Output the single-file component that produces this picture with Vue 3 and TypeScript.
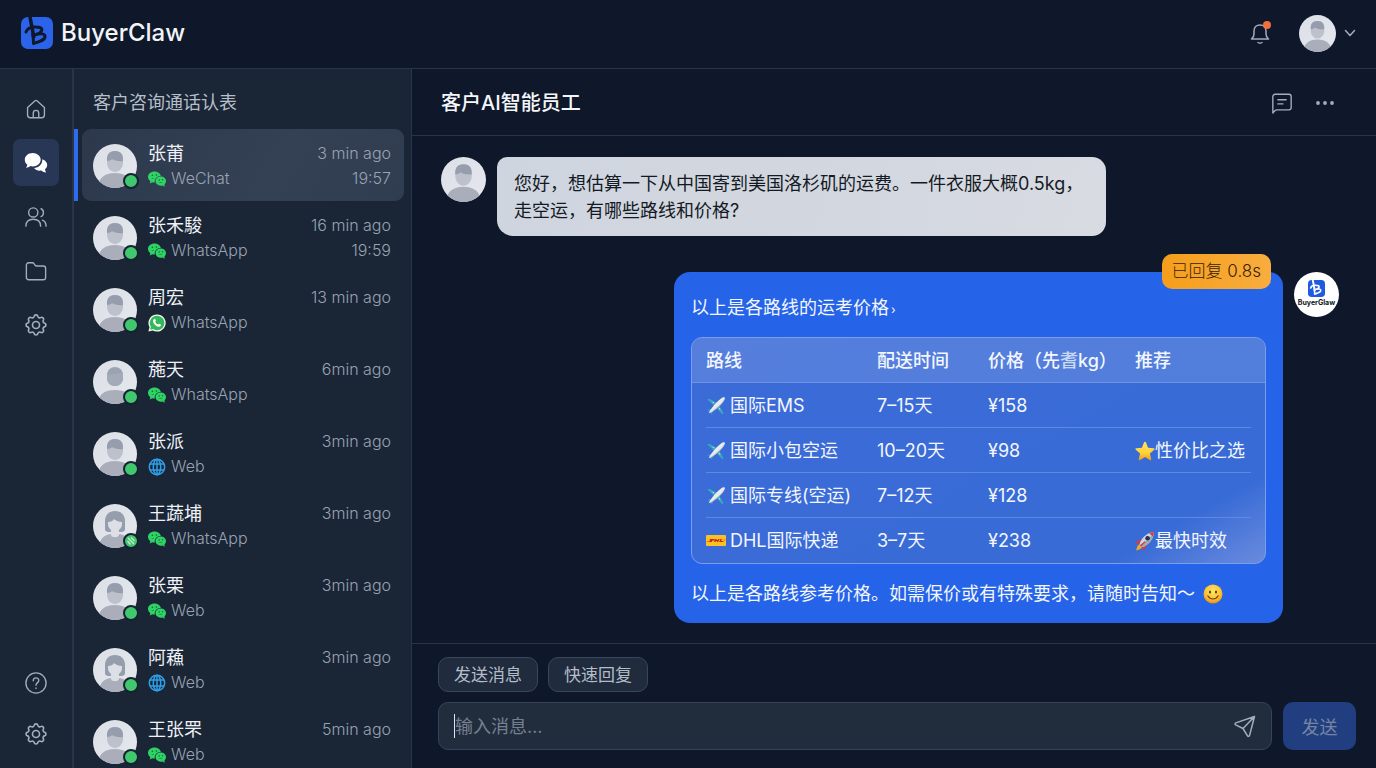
<script setup lang="ts">
import { ref } from 'vue'

type Channel = 'wechat' | 'whatsapp' | 'web'

interface Contact {
  name: string
  channel: Channel
  label: string
  ago: string
  time?: string
  avatar: 'man' | 'woman' | 'bald'
  badge?: boolean
}

interface Quote {
  icon: 'plane' | 'dhl'
  route: string
  days: string
  price: string
  tag?: string
  tagIcon?: 'star' | 'rocket'
}

const contacts: Contact[] = [
  { name: '张莆', channel: 'wechat', label: 'WeChat', ago: '3 min ago', time: '19:57', avatar: 'man' },
  { name: '张禾駿', channel: 'wechat', label: 'WhatsApp', ago: '16 min ago', time: '19:59', avatar: 'man' },
  { name: '周宏', channel: 'whatsapp', label: 'WhatsApp', ago: '13 min ago', avatar: 'man' },
  { name: '葹天', channel: 'wechat', label: 'WhatsApp', ago: '6min ago', avatar: 'bald' },
  { name: '张派', channel: 'web', label: 'Web', ago: '3min ago', avatar: 'man' },
  { name: '王蔬埔', channel: 'wechat', label: 'WhatsApp', ago: '3min ago', avatar: 'woman', badge: true },
  { name: '张栗', channel: 'wechat', label: 'Web', ago: '3min ago', avatar: 'man' },
  { name: '阿蘓', channel: 'web', label: 'Web', ago: '3min ago', avatar: 'woman' },
  { name: '王张罘', channel: 'wechat', label: 'Web', ago: '5min ago', avatar: 'man' },
]

const quotes: Quote[] = [
  { icon: 'plane', route: '国际EMS', days: '7–15天', price: '¥158' },
  { icon: 'plane', route: '国际小包空运', days: '10–20天', price: '¥98', tag: '性价比之选', tagIcon: 'star' },
  { icon: 'plane', route: '国际专线(空运)', days: '7–12天', price: '¥128' },
  { icon: 'dhl', route: 'DHL国际快递', days: '3–7天', price: '¥238', tag: '最快时效', tagIcon: 'rocket' },
]

const selected = ref(0)
const draft = ref('')
</script>

<template>
  <div class="app">
    <svg class="sprite" aria-hidden="true">
      <defs>
        <linearGradient id="face-bg" x1="0" y1="0" x2="1" y2="1">
          <stop offset="0" stop-color="#dcdfe6" />
          <stop offset="1" stop-color="#e6e8ee" />
        </linearGradient>
        <linearGradient id="star-fill" x1="0" y1="0" x2="0" y2="1">
          <stop offset="0" stop-color="#ffe45c" />
          <stop offset="0.6" stop-color="#ffd23a" />
          <stop offset="1" stop-color="#f59a1b" />
        </linearGradient>
        <radialGradient id="smile-fill" cx="0.5" cy="0.35" r="0.65">
          <stop offset="0" stop-color="#ffe76a" />
          <stop offset="0.65" stop-color="#fcc22e" />
          <stop offset="1" stop-color="#ee8a1d" />
        </radialGradient>
        <clipPath id="face-clip"><circle cx="22" cy="22" r="22" /></clipPath>
      </defs>
      <symbol id="man" viewBox="0 0 44 44">
        <g clip-path="url(#face-clip)">
          <rect width="44" height="44" fill="url(#face-bg)" />
          <path d="M5 44c0-10 7-15 17-15s17 5 17 15z" fill="#a9aeba" />
          <path d="M14 14c0-4 3-7 8-7s8 3 8 7v5c0 5-4 9-8 9s-8-4-8-9z" fill="#bcc1cc" />
          <path d="M14 17c-.5-6 2-10 8-10s8.500 4 8 10c-3 .5-8 0-11-2-1 1.500-3 1.500-5 2z" fill="#969dac" />
        </g>
      </symbol>
      <symbol id="bald" viewBox="0 0 44 44">
        <g clip-path="url(#face-clip)">
          <rect width="44" height="44" fill="url(#face-bg)" />
          <path d="M5 44c0-10 7-14 17-14s17 4 17 14z" fill="#a9aeba" />
          <rect x="14" y="7" width="16" height="19" rx="8" fill="#9ba2b0" />
          <path d="M14 15c5-1 10-1 16-2v5c0 5-3.500 8-8 8s-8-3-8-8z" fill="#a4aab7" />
        </g>
      </symbol>
      <symbol id="woman" viewBox="0 0 44 44">
        <g clip-path="url(#face-clip)">
          <rect width="44" height="44" fill="url(#face-bg)" />
          <path d="M6 44c0-9 5-13 12-14h8c7 1 12 5 12 14z" fill="#a9aeba" />
          <path d="M12 25V17c0-6 4-10 10-10s10 4 10 10v8c0 2-1.500 3-3.500 3h-13c-2 0-3.500-1-3.500-3z" fill="#969dac" />
          <path d="M18 24h8v7c-1 3-7 3-8 0z" fill="#dcdfe6" />
          <path d="M15 18c3 0 5-1 6-3 2 2 5 3 8 3v2c0 4-3 7-7 7s-7-3-7-7z" fill="#dcdfe6" />
        </g>
      </symbol>
      <symbol id="wechat" viewBox="0 0 18 16">
        <path d="M6.500 .6C2.900.6 0 2.900 0 6c0 1.700.9 3.200 2.300 4.200l-.5 2.300 2.600-1.300c.8.200 1.500.3 2.300.2C6.500 7.600 9 5 12.900 5 12.200 2.400 9.600.6 6.500.6z" fill="#2fd264" />
        <path d="M18 10.100c0-2.700-2.400-4.600-5.200-4.600S7.500 7.400 7.500 10.100s2.400 4.600 5.300 4.600c.6 0 1.200-.1 1.700-.2l2.300 1.300-.4-2.200c.9-.8 1.600-2 1.600-3.500z" fill="#2fd264" />
        <g fill="#17603c">
          <circle cx="4.400" cy="4.300" r=".8" /><circle cx="8.400" cy="4" r=".8" />
          <circle cx="11.200" cy="9" r=".7" /><circle cx="14.500" cy="8.700" r=".7" />
          <path d="M11.300 11.200h2.900v.6h-2.900zM3.800 7.300h2v.5h-2z" />
        </g>
      </symbol>
      <symbol id="whatsapp" viewBox="0 0 18 18">
        <path d="M9 .4A8.600 8.600 0 0 0 1.500 13.200L.4 17.600l4.500-1.100A8.600 8.600 0 1 0 9 .4z" fill="#f1f7f3" />
        <path d="M9 1.800a7.200 7.200 0 0 0-6.100 11l-.7 2.900 3-.7A7.200 7.200 0 1 0 9 1.800z" fill="#35b85c" />
        <path d="M6.300 4.900c.5-.3.900-.1 1.100.4l.5 1.200c.1.500-.6 1-.7 1.300.5 1.200 1.500 2.200 2.900 2.800.4-.1.800-.9 1.300-.8l1.300.7c.5.300.3.900.1 1.300-.5.900-1.700 1.200-2.700.9-2.500-.8-4.300-2.500-5-4.900-.3-1.200.2-2.400 1.200-2.900z" fill="#fff" />
      </symbol>
      <symbol id="web" viewBox="0 0 18 18">
        <g fill="none" stroke="#2f9fe8" stroke-width="1.500">
          <circle cx="9" cy="9" r="7.700" />
          <ellipse cx="9" cy="9" rx="3.700" ry="7.700" />
          <path d="M9 1.300v15.400M2 6h14M2 12h14" />
        </g>
      </symbol>
      <symbol id="plane" viewBox="0 0 20 20">
        <path d="M1.500 3.500l1.800-.8 8.200 4.600-2.800 2.900zM16.500 18.500l.8-1.800-4.600-8.200-2.900 2.800z" fill="#38a9bd" />
        <path d="M1.300 14.300l1.500-.7 3.700.2-1.300 1.400zM5.600 18.800l.8-1.500-.2-3.800-1.500 1.300z" fill="#38a9bd" />
        <path d="M2.800 17.200c1-3.700 9.300-13.200 13.700-15.600 1.500-.8 2.700-.6 2.300 1.200C17.800 7.200 7.500 16.300 2.800 17.200z" fill="#e9ecef" />
        <path d="M2.800 17.200c5-2.500 13-9.700 16-14.400C17.800 7.200 7.500 16.300 2.800 17.200z" fill="#a9b3bd" />
        <path d="M6.600 6.200l1.200.5M13.300 12.200l.5 1.300" stroke="#d7e6ea" stroke-width="1" />
      </symbol>
      <symbol id="dhl" viewBox="0 0 20 20">
        <rect x="0" y="4" width="20" height="11" rx="1" fill="#f9c224" />
        <path d="M3.500 8h4.600c1 0 .9 1 .2 1.400H6.500L5.700 11H3l1.100-2zM9.300 8h1.500l-.4 1h1.200l.5-1h1.500l-1.400 3h-1.500l.4-1.100h-1.100L9.500 11H8zM14.400 8h1.600l-1 2h2.600l-.5 1h-3.900z" fill="#cf2418" />
        <path d="M.8 10h2v.6h-2zM17.300 8.700h2v.6h-2z" fill="#cf2418" />
      </symbol>
      <symbol id="star" viewBox="0 0 20 20">
        <path d="M10 .8c.5 0 .8.300 1 .8l2.100 5.100 5.600.5c1 .1 1.200 1 .5 1.600l-4.300 3.700 1.300 5.600c.2.900-.5 1.400-1.300.9L10 16l-4.900 3c-.8.500-1.500 0-1.300-.9l1.300-5.600L.8 8.800C.1 8.200.3 7.300 1.300 7.200l5.600-.5L9 1.600c.2-.5.5-.8 1-.8z" fill="url(#star-fill)" />
      </symbol>
      <symbol id="rocket" viewBox="0 0 20 20">
        <path d="M6.500 8.200L2 10.300.9 13l4-.8zM12 13.500l-2 4.600-2.700 1.200.8-4z" fill="#d83a3f" />
        <path d="M4.700 13.200C2.600 13.800 1.800 16 1.200 19.400c3.300-.6 5.500-1.800 5.900-3.900z" fill="#f7a526" />
        <path d="M4.500 13.500C5.500 8 11 1.900 18.900.9 18.800 8.500 12.500 14.800 7 16z" fill="#cfd5dc" />
        <path d="M4.500 13.500L7 16c5.500-1.200 11.800-7.500 11.900-15.100C16 6 10 11.500 4.500 13.500z" fill="#9fa8b5" />
        <path d="M14.300 2.300c1.500-.7 3-1.200 4.600-1.400-.1 1.600-.5 3.200-1.200 4.700z" fill="#d83a3f" />
        <circle cx="12.600" cy="7.200" r="2.300" fill="#27324c" />
        <path d="M4.900 14.800l4.700-4.600 1 .9-4.400 4.300z" fill="#d83a3f" />
      </symbol>
      <symbol id="smile" viewBox="0 0 20 20">
        <circle cx="10" cy="10" r="9.500" fill="url(#smile-fill)" />
        <ellipse cx="7" cy="8" rx="1.100" ry="1.600" fill="#6b3d12" />
        <ellipse cx="13" cy="8" rx="1.100" ry="1.600" fill="#6b3d12" />
        <path d="M4.800 11.800c2.500 4.300 7.900 4.300 10.400 0" fill="none" stroke="#6b3d12" stroke-width="1.100" stroke-linecap="round" />
      </symbol>
      <symbol id="gear" viewBox="0 0 24 24">
        <path d="M10.300 3.300c.4-1.800 3-1.800 3.400 0a1.700 1.700 0 0 0 2.600 1.100c1.500-1 3.300.8 2.400 2.400a1.700 1.700 0 0 0 1 2.600c1.800.4 1.800 3 0 3.400a1.700 1.700 0 0 0-1 2.600c.9 1.500-.9 3.300-2.400 2.400a1.700 1.700 0 0 0-2.600 1c-.4 1.800-3 1.800-3.400 0a1.700 1.700 0 0 0-2.600-1c-1.500.9-3.300-.9-2.400-2.400a1.700 1.700 0 0 0-1-2.600c-1.800-.4-1.800-3 0-3.400a1.700 1.700 0 0 0 1-2.600c-.9-1.500.9-3.300 2.400-2.400 1 .6 2.300.1 2.600-1.100z" transform="translate(0 .9)" />
        <circle cx="12" cy="12" r="3.200" />
      </symbol>
      <symbol id="mark" viewBox="0 0 32 32">
        <path d="M9 0l4 21" fill="none" stroke="currentColor" stroke-width="3.600" />
        <path d="M5 15c1-3 4.500-5 9-5 5 0 8 1 6.500 3.800-1 2-3 3-5.500 3.700 4.500-1.500 9.500-1 9 2.500-.4 3.500-5.500 4.500-11.500 6.500 0-3-.2-6-.8-9" fill="none" stroke="currentColor" stroke-width="3" stroke-linejoin="round" stroke-linecap="round" />
      </symbol>
    </svg>

    <header class="topbar">
      <div class="brand">
        <svg class="logo" viewBox="0 0 32 32" aria-hidden="true">
          <rect width="32" height="32" rx="7" fill="#2b63ea" />
          <use href="#mark" width="32" height="32" />
        </svg>
        <span class="brand-name">BuyerClaw</span>
      </div>
      <div class="account">
        <button class="icon-btn bell" type="button" aria-label="通知">
          <svg class="line" viewBox="0 0 24 24" width="24" height="24" aria-hidden="true">
            <path d="M3.500 18c1.600-1.200 2.500-2.500 2.500-5V10c0-3.700 2.500-6 6-6s6 2.300 6 6v3c0 2.500.9 3.800 2.500 5zM10 21.500c1.200.8 2.800.8 4 0" />
          </svg>
          <span class="dot"></span>
        </button>
        <button class="icon-btn profile" type="button" aria-label="账户">
          <svg class="me" aria-hidden="true"><use href="#man" /></svg>
          <svg class="line" viewBox="0 0 12 12" width="12" height="12" aria-hidden="true"><path d="M1.500 3.500L6 8.500l4.500-5" /></svg>
        </button>
      </div>
    </header>

    <div class="body">
      <nav class="rail" aria-label="导航">
        <div class="rail-top">
          <button class="rail-btn" type="button" aria-label="主页">
            <svg class="line" viewBox="0 0 24 24" aria-hidden="true"><path d="M2.800 10.300L11 3c.6-.5 1.400-.5 2 0l8.200 7.300V18.500a3 3 0 0 1-3 3H5.800a3 3 0 0 1-3-3zM9 21.500v-5a3 3 0 0 1 6 0v5" /></svg>
          </button>
          <button class="rail-btn current" type="button" aria-label="会话">
            <svg viewBox="0 0 24 24" aria-hidden="true">
              <path d="M8.700 2C4.300 2 .8 4.900.8 8.700c0 2 .9 3.700 2.400 4.900.1 1.100-.4 2.200-1.300 3.100 1.800 0 3.300-.6 4.400-1.600.8.200 1.600.3 2.400.3 4.400 0 8-3 8-6.700S13.100 2 8.700 2z" fill="#fff" />
              <path d="M18.300 8.300c.2 4.800-3.400 8.300-8.300 8.800 1.400 2 4.200 3 7.200 2.500 1.500 1.200 3.100 1.900 5 1.900-.8-1.100-1.200-2.200-1.100-3.400 3.600-2.900 2.500-8-2.800-9.800z" fill="#fff" />
            </svg>
          </button>
          <button class="rail-btn" type="button" aria-label="客户">
            <svg class="line" viewBox="0 0 24 24" aria-hidden="true"><circle cx="9" cy="7" r="5" /><path d="M1 22c0-5 3-7.500 8-7.500s8 2.500 8 7.500M17.500 3c3.500 1.500 3.500 7 0 8.500M19 15.500c2.800 1 4 3 4 6.500" /></svg>
          </button>
          <button class="rail-btn" type="button" aria-label="文件">
            <svg class="line" viewBox="0 0 24 24" aria-hidden="true"><path d="M1.500 5.500a2.500 2.500 0 0 1 2.500-2.500h4c1 0 1.500.4 2 1.200l1 1.500c.4.500.9.800 1.600.8H20a2.500 2.500 0 0 1 2.500 2.500v10A2.500 2.500 0 0 1 20 21.500H4a2.500 2.500 0 0 1-2.500-2.500z" /></svg>
          </button>
          <button class="rail-btn" type="button" aria-label="设置">
            <svg class="line" viewBox="2 2 20 20" aria-hidden="true"><use href="#gear" width="24" height="24" /></svg>
          </button>
        </div>
        <div class="rail-bottom">
          <button class="rail-btn" type="button" aria-label="帮助">
            <svg class="line" viewBox="0 0 24 24" aria-hidden="true"><circle cx="12" cy="12" r="11" /><path d="M9 9.500c0-4 6-4 6-.3 0 2.500-3 2.300-3 5.300M12 17.300v.6" /></svg>
          </button>
          <button class="rail-btn" type="button" aria-label="系统">
            <svg class="line" viewBox="2 2 20 20" aria-hidden="true"><use href="#gear" width="24" height="24" /></svg>
          </button>
        </div>
      </nav>

      <aside class="contacts">
        <h2 class="contacts-title">客户咨询通话认表</h2>
        <ul class="contact-list">
          <li v-for="(c, i) in contacts" :key="i" class="contact-row" :class="{ selected: i === selected }">
            <button class="contact" type="button" @click="selected = i">
              <span class="avatar">
                <svg aria-hidden="true"><use :href="'#' + c.avatar" /></svg>
                <span class="status">
                  <svg v-if="c.badge" viewBox="0 0 12 12" aria-hidden="true"><path d="M3 3l6 6M2.500 6l3 3.500M6 2.500L9.500 6" /></svg>
                </span>
              </span>
              <span class="who">
                <span class="name">{{ c.name }}</span>
                <span class="channel">
                  <svg aria-hidden="true"><use :href="'#' + c.channel" /></svg>
                  <span>{{ c.label }}</span>
                </span>
              </span>
              <span class="when">
                <span>{{ c.ago }}</span>
                <span v-if="c.time">{{ c.time }}</span>
              </span>
            </button>
          </li>
        </ul>
      </aside>

      <main class="chat">
        <div class="chat-head">
          <h1>客户AI智能员工</h1>
          <div class="chat-tools">
            <button class="icon-btn" type="button" aria-label="备注">
              <svg class="line" viewBox="0 0 24 24" width="22" height="22" aria-hidden="true"><path d="M2 22.800V5a2.500 2.500 0 0 1 2.500-2.500h15A2.500 2.500 0 0 1 22 5v12a2.500 2.500 0 0 1-2.500 2.500H6.500c-1 0-1.600.3-2.300 1zM7.500 8.500h9M7.500 13H13" /></svg>
            </button>
            <button class="icon-btn" type="button" aria-label="更多">
              <svg class="more" viewBox="0 0 20 20" width="20" height="20" aria-hidden="true"><circle cx="3" cy="10" r="1.900" /><circle cx="10" cy="10" r="1.900" /><circle cx="17" cy="10" r="1.900" /></svg>
            </button>
          </div>
        </div>

        <section class="messages">
          <article class="message">
            <svg class="face" aria-hidden="true"><use href="#man" /></svg>
            <p class="bubble incoming">您好，想估算一下从中国寄到美国洛杉矶的运费。一件衣服大概0.5kg，<br />走空运，有哪些路线和价格?</p>
          </article>

          <article class="message outgoing-row">
            <div class="bubble outgoing">
              <span class="reply-badge">已回复 0.8s</span>
              <p>以上是各路线的运考价格<small>›</small></p>
              <table class="quotes">
                <thead>
                  <tr>
                    <th scope="col" class="col-route">路线</th>
                    <th scope="col" class="col-days">配送时间</th>
                    <th scope="col" class="col-price">价格（先<span class="faint">耆</span>kg）</th>
                    <th scope="col">推荐</th>
                  </tr>
                </thead>
                <tbody>
                  <tr v-for="q in quotes" :key="q.route">
                    <td><span class="cell route"><svg aria-hidden="true"><use :href="'#' + q.icon" /></svg>{{ q.route }}</span></td>
                    <td>{{ q.days }}</td>
                    <td>{{ q.price }}</td>
                    <td><span v-if="q.tag" class="cell"><svg aria-hidden="true"><use :href="'#' + q.tagIcon" /></svg>{{ q.tag }}</span></td>
                  </tr>
                </tbody>
              </table>
              <p class="cell closing">以上是各路线参考价格。如需保价或有特殊要求，请随时告知～<svg aria-hidden="true"><use href="#smile" /></svg></p>
            </div>
            <div class="bot">
              <svg viewBox="0 0 32 32" aria-hidden="true"><rect width="32" height="32" rx="7" fill="#1f5be0" /><use href="#mark" width="32" height="32" /></svg>
              <span>BuyerGlaw</span>
            </div>
          </article>
        </section>

        <form class="composer" @submit.prevent>
          <div class="shortcuts">
            <button type="button">发送消息</button>
            <button type="button">快速回复</button>
          </div>
          <div class="entry">
            <div class="field">
              <span class="caret"></span>
              <input v-model="draft" type="text" placeholder="输入消息..." aria-label="输入消息" />
              <svg class="line" viewBox="0 0 24 24" width="24" height="24" aria-hidden="true"><path d="M21.500 2.500L2.800 8.900c-1 .4-1 1.500-.1 2l7.300 3.600 4.500 7.300c.5.900 1.700.7 2-.2zM10 14.500L21.500 2.500" /></svg>
            </div>
            <button class="send" type="submit">发送</button>
          </div>
        </form>
      </main>
    </div>
  </div>
</template>

<style>
body {
  background: #0f182a;
}
</style>

<style scoped>
* {
  box-sizing: border-box;
}

.app {
  display: flex;
  flex-direction: column;
  height: 100vh;
  overflow: hidden;
  background: #0f182a;
  color: #e6eaf0;
  font-family: Inter, "Noto Sans CJK SC", sans-serif;
  font-size: 18px;
}

button {
  margin: 0;
  padding: 0;
  border: 0;
  background: none;
  color: inherit;
  font: inherit;
  cursor: pointer;
}

h1,
h2,
p,
ul {
  margin: 0;
  padding: 0;
}

.sprite {
  position: absolute;
  width: 0;
  height: 0;
}

.line {
  fill: none;
  stroke: #a3adbc;
  stroke-width: 1.5;
  stroke-linecap: round;
  stroke-linejoin: round;
}

.topbar {
  display: flex;
  flex: none;
  align-items: center;
  justify-content: space-between;
  height: 69px;
  padding: 0 20px 2px 21px;
  border-bottom: 1px solid #263547;
}

.brand {
  display: flex;
  align-items: center;
  gap: 8px;
}

.logo {
  width: 32px;
  height: 32px;
  color: #0f182a;
}

.brand-name {
  font-size: 24px;
  font-weight: 500;
  line-height: 32px;
  color: #f2f4f7;
}

.account,
.profile,
.chat-tools {
  display: flex;
  align-items: center;
}

.account {
  gap: 27px;
}

.icon-btn {
  position: relative;
  line-height: 0;
}

.dot {
  position: absolute;
  top: 0;
  right: 1px;
  width: 8px;
  height: 8px;
  border-radius: 50%;
  background: #f0703c;
}

.profile {
  gap: 8px;
}

.me {
  width: 37px;
  height: 37px;
}

.body {
  display: flex;
  flex: 1;
  min-height: 0;
}

.rail {
  display: flex;
  flex: none;
  flex-direction: column;
  justify-content: space-between;
  width: 74px;
  padding: 16px 13px 11px;
  background: #1a2536;
  border-right: 2px solid #273548;
}

.rail-top,
.rail-bottom {
  display: flex;
  flex-direction: column;
  gap: 7px;
}

.rail-bottom {
  gap: 4px;
}

.rail-btn {
  display: flex;
  align-items: center;
  justify-content: center;
  width: 46px;
  height: 47px;
  border-radius: 7px;
}

.rail-btn svg {
  width: 22px;
  height: 22px;
}

.rail-btn.current {
  background: #293757;
}

.rail-btn.current svg {
  width: 24px;
  height: 24px;
}

.contacts {
  flex: none;
  width: 338px;
  overflow: hidden;
  background: #1a2536;
  border-right: 1px solid #273548;
}

.contacts-title {
  padding: 20px 19px 13px;
  color: #b6bec9;
  font-size: 18px;
  font-weight: 400;
  line-height: 27px;
}

.contact-list {
  list-style: none;
}

.contact-row {
  padding: 0 7px 0 4px;
  border-left: 4px solid transparent;
}

.contact-row.selected {
  border-image: linear-gradient(#2f6bee, #2f6bee) 1;
}

.contact {
  display: flex;
  align-items: center;
  width: 100%;
  height: 72px;
  padding: 2px 13px 0 11px;
  border-radius: 9px;
  text-align: left;
  line-height: 25px;
}

.selected .contact {
  background: linear-gradient(120deg, #2c384b, #344054 60%, #303c50);
}

.avatar {
  position: relative;
  flex: none;
  width: 44px;
  height: 44px;
}

.avatar > svg {
  display: block;
  width: 44px;
  height: 44px;
}

.status {
  position: absolute;
  right: -2px;
  bottom: -1px;
  width: 16px;
  height: 16px;
  border: 2px solid #152232;
  border-radius: 50%;
  background: #41c76d;
}

.status svg {
  display: block;
  width: 12px;
  height: 12px;
  fill: none;
  stroke: #c4f0cf;
  stroke-width: 1.2;
}

.who {
  display: flex;
  flex: 1;
  flex-direction: column;
  margin-left: 11px;
}

.name {
  color: #eef1f5;
}

.channel {
  display: flex;
  align-items: center;
  gap: 5px;
}

.channel svg {
  width: 18px;
  height: 18px;
}

.channel,
.when {
  color: #98a3b2;
  font-size: 16px;
  font-weight: 300;
}

.when {
  display: flex;
  flex-direction: column;
  align-self: flex-start;
  margin-top: 10px;
  text-align: right;
}

.chat {
  display: flex;
  flex: 1;
  flex-direction: column;
  min-width: 0;
}

.chat-head {
  display: flex;
  flex: none;
  align-items: center;
  justify-content: space-between;
  height: 67px;
  padding: 1px 41px 0 29px;
  border-bottom: 1px solid #263547;
}

.chat-head h1 {
  color: #f4f6f9;
  font-size: 20px;
  font-weight: 500;
  line-height: 30px;
}

.chat-tools {
  gap: 22px;
}

.more {
  fill: #a3adbc;
}

.messages {
  display: flex;
  flex: 1;
  flex-direction: column;
  gap: 36px;
  min-height: 0;
  padding: 21px 37px 20px 29px;
}

.message {
  display: flex;
  align-items: flex-start;
  gap: 11px;
}

.outgoing-row {
  justify-content: flex-end;
}

.face {
  flex: none;
  width: 45px;
  height: 45px;
}

.bubble {
  width: 609px;
  line-height: 27px;
}

.incoming {
  padding: 13px 17px 12px;
  border-radius: 10px 14px 14px 16px;
  background: linear-gradient(100deg, #cfd5df, #d3d7df 60%, #d8dbe2);
  color: #141a24;
}

.outgoing {
  position: relative;
  padding: 22px 17px 16px;
  border-radius: 16px 14px 16px 16px;
  background: #2563e8;
  color: #f3f6fd;
}

.outgoing small {
  margin-left: 2px;
  font-size: 12px;
}

.reply-badge {
  position: absolute;
  top: -18px;
  right: 12px;
  padding: 4px 10px;
  border-radius: 10px;
  background: linear-gradient(90deg, #f59e1c, #f8ad3f);
  color: #3a2207;
  font-size: 17px;
  font-weight: 300;
  line-height: 27px;
}

.quotes {
  width: 100%;
  margin: 14px 0 16px;
  overflow: hidden;
  border: 1px solid #7c9cec;
  border-radius: 11px;
  border-spacing: 0;
  background: linear-gradient(150deg, #3c6bd8 0%, #386bd6 84%, #6a8bde 100%);
  line-height: 27px;
  table-layout: fixed;
}

.quotes th,
.quotes td {
  height: 45px;
  padding: 0;
  font-weight: 400;
  text-align: left;
  white-space: nowrap;
}

.quotes th {
  background: rgb(255 255 255 / 13%);
  border-bottom: 1px solid #6f92e4;
  font-weight: 500;
}

.quotes th:first-child,
.quotes td:first-child {
  padding-left: 14px;
}

.quotes tbody tr:not(:last-child) {
  background: linear-gradient(#5f88e0, #5f88e0) center bottom / calc(100% - 28px) 1px no-repeat;
}

.col-route {
  width: 185px;
}

.col-days {
  width: 111px;
}

.col-price {
  width: 147px;
}

.faint {
  opacity: 0.75;
}

.cell {
  display: flex;
  align-items: center;
}

.cell svg {
  flex: none;
  width: 20px;
  height: 20px;
}

.route {
  gap: 4px;
}

.closing {
  gap: 8px;
}

.bot {
  display: flex;
  flex: none;
  flex-direction: column;
  align-items: center;
  width: 45px;
  height: 45px;
  padding-top: 8px;
  border-radius: 50%;
  background: #fff;
  color: #0d1526;
  font-size: 7px;
  font-weight: 700;
  line-height: 12px;
}

.bot svg {
  flex: none;
  width: 17px;
  height: 17px;
  color: #fff;
}

.composer {
  flex: none;
  padding: 13px 20px 18px 26px;
  border-top: 1px solid #263547;
}

.shortcuts {
  display: flex;
  gap: 10px;
}

.shortcuts button {
  height: 35px;
  padding: 0 15px 2px;
  border: 1px solid #3a4759;
  border-radius: 10px;
  background: #202c3d;
  color: #b3bcc8;
  font-size: 17px;
}

.entry {
  display: flex;
  gap: 11px;
  margin-top: 10px;
}

.field {
  display: flex;
  flex: 1;
  align-items: center;
  height: 48px;
  padding: 0 14px 0 15px;
  border: 1px solid #354458;
  border-radius: 10px;
  background: #212d3d;
}

.caret {
  width: 1px;
  height: 24px;
  background: #dfe4ea;
}

.field input {
  flex: 1;
  min-width: 0;
  padding: 0;
  border: 0;
  outline: 0;
  background: none;
  color: #e6eaf0;
  font: inherit;
}

.field input::placeholder {
  color: #748091;
  opacity: 1;
}

.send {
  width: 73px;
  height: 48px;
  border-radius: 10px;
  background: #213f80;
  color: #7784a0;
}
</style>
